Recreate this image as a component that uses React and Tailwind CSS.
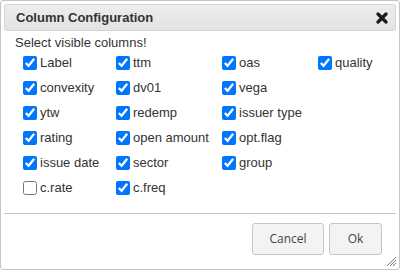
import React from 'react';

const rows = [
  [['Label', true], ['ttm', true], ['oas', true], ['quality', true]],
  [['convexity', true], ['dv01', true], ['vega', true]],
  [['ytw', true], ['redemp', true], ['issuer type', true]],
  [['rating', true], ['open amount', true], ['opt.flag', true]],
  [['issue date', true], ['sector', true], ['group', true]],
  [['c.rate', false], ['c.freq', true]],
];

const Check = ({ label, checked }) => (
  <label className="flex items-center h-[25px]">
    <input type="checkbox" defaultChecked={checked} className="m-0 w-[14px] h-[14px] accent-[#0075ff]" />
    <span className="ml-[3px] text-[13px] text-[#333]">{label}</span>
  </label>
);

export default function App() {
  return (
    <div className="w-[400px] h-[270px] bg-white" style={{ fontFamily: '"Liberation Sans", Arial, sans-serif' }}>
      <div className="w-[400px] h-[270px] border border-[#c5c5c5] rounded-[3px] flex flex-col relative">
        {/* Title bar */}
        <div className="mx-[3px] mt-[3px] h-[27px] bg-gradient-to-b from-[#ededed] to-[#e3e3e3] border border-[#d3d3d3] rounded-[3px] flex items-center justify-between pl-[11px] pr-[7px]">
          <span className="text-[13px] font-bold text-[#333]">Column Configuration</span>
          <svg width="12" height="12" viewBox="0 0 12 12">
            <path d="M2 2L10 10M10 2L2 10" stroke="#1a1a1a" strokeWidth="3.2" strokeLinecap="round" />
          </svg>
        </div>

        {/* Content */}
        <div className="px-[14px] pt-[4px] h-[182px]">
          <p className="text-[13px] text-[#333] leading-[15px]">Select visible columns!</p>
          <div className="ml-[8px] grid grid-cols-[93px_106px_96px_auto]">
            {rows.map((row, i) =>
              [0, 1, 2, 3].map((j) =>
                row[j] ? (
                  <Check key={`${i}-${j}`} label={row[j][0]} checked={row[j][1]} />
                ) : (
                  <div key={`${i}-${j}`} />
                )
              )
            )}
          </div>
        </div>

        {/* Footer */}
        <div className="mx-[3px] border-t border-[#c5c5c5] flex justify-end gap-[5px] pt-[9px] pr-[14px]">
          <button className="w-[72px] h-[32px] bg-[#f3f3f3] border border-[#c5c5c5] rounded-[3px] text-[12px] text-[#454545]" style={{ fontFamily: '"Open Sans", sans-serif' }}>
            Cancel
          </button>
          <button className="w-[53px] h-[32px] bg-[#f3f3f3] border border-[#c5c5c5] rounded-[3px] text-[12px] text-[#454545]" style={{ fontFamily: '"Open Sans", sans-serif' }}>
            Ok
          </button>
        </div>

        {/* Resize handle */}
        <svg className="absolute right-[2px] bottom-[2px]" width="12" height="12" viewBox="0 0 12 12">
          <path d="M11 2L2 11M11 5L5 11M11 8L8 11" stroke="#777" strokeWidth="1" />
        </svg>
      </div>
    </div>
  );
}
